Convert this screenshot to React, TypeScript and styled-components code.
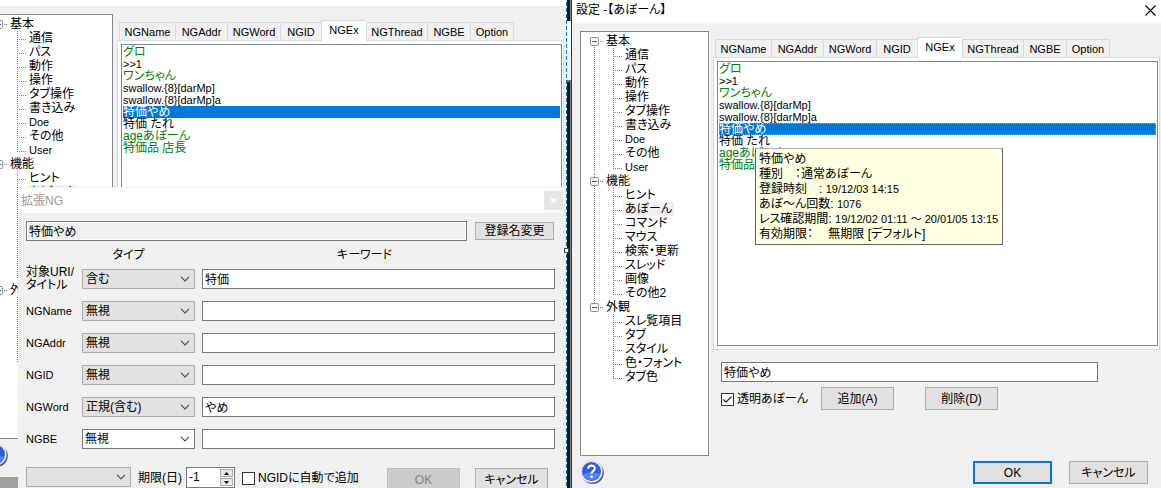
import React, { useState } from "react";
import styled, { createGlobalStyle, css } from "styled-components";

const Global = createGlobalStyle`
  *, *::before, *::after { box-sizing: border-box; }
  html, body { margin: 0; padding: 0; background: #f0f0f0; }
  body, button, input, select {
    font-family: "Liberation Sans", "Noto Sans CJK JP", sans-serif;
    font-size: 12px;
    line-height: 14px;
    font-feature-settings: "palt";
    color: #000;
  }
  ul { list-style: none; margin: 0; padding: 0; }
  p { margin: 0; }
`;

const dotsDown = "repeating-linear-gradient(to bottom, #808080 0 1px, transparent 1px 2px)";
const dotsAcross = "repeating-linear-gradient(to right, #808080 0 1px, transparent 1px 2px)";

const Desktop = styled.main`
  display: grid;
  grid-template-columns: minmax(0, 566fr) 6px minmax(0, 589fr);
  min-height: 100vh;
`;

const LeftPane = styled.section`
  position: relative;
  overflow: hidden;
  background: #a0a0a0;
`;

const RightPane = styled.section`
  min-width: 0;
  background: #f0f0f0;
`;

/* ---------- strip of desktop between the two windows ---------- */

const Strip = styled.div`
  position: relative;
  display: grid;
  grid-template-columns: 1px 1fr 1px;
`;

const DashedEdge = styled.div`
  background: repeating-linear-gradient(to bottom, #fff 0 2px, #0078d7 2px 6px);
`;

const StripFill = styled.div`
  background: linear-gradient(to bottom, transparent 0 21px, #fff 21px 51px, #f0f0f0 51px 80px, #707070 80px 82px, transparent 82px),
    linear-gradient(to right, #181818 0 3px, #858585 3px);
`;

const StripEdge = styled.div`
  background: #383838;
`;

const Handle = styled.div`
  position: absolute;
  left: -2px;
  top: 248px;
  width: 5px;
  height: 5px;
  border: 1px solid #444;
  background: #fff;
`;

/* ---------- shared controls ---------- */

const PushButton = styled.button<{ $width: number; $height?: number; $primary?: boolean }>`
  width: ${(p) => p.$width}px;
  height: ${(p) => p.$height ?? 23}px;
  flex: none;
  padding: 0;
  border: ${(p) => (p.$primary ? "2px solid #0078d7" : "1px solid #adadad")};
  background: #e1e1e1;
  white-space: nowrap;
  &:disabled {
    border-color: #bfbfbf;
    background: #ccc;
    color: #838383;
  }
`;

const TextField = styled.input`
  width: 100%;
  min-width: 0;
  height: 20px;
  padding: 0 2px 2px;
  border: 1px solid #7a7a7a;
  border-radius: 0;
  background: #fff;
  outline: none;
  &:read-only {
    background: #f0f0f0;
    box-shadow: inset 0 0 0 1px #fff;
  }
`;

const SelectBox = styled.div<{ $white?: boolean }>`
  display: grid;
  height: 20px;
  align-items: center;
  border: 1px solid ${(p) => (p.$white ? "#7a7a7a" : "#adadad")};
  background: ${(p) => (p.$white ? "#fff" : "#e1e1e1")};
  select {
    grid-area: 1 / 1;
    width: 100%;
    height: 18px;
    padding: 0 0 0 ${(p) => (p.$white ? 2 : 3)}px;
    border: 0;
    background: transparent;
    appearance: none;
    outline: none;
  }
  svg {
    grid-area: 1 / 1;
    justify-self: end;
    margin-right: 4px;
    pointer-events: none;
  }
`;

const CheckLabel = styled.label`
  display: flex;
  align-items: center;
  gap: 3px;
  white-space: nowrap;
`;

const CheckFrame = styled.span`
  display: grid;
  width: 13px;
  height: 13px;
  flex: none;
  input {
    grid-area: 1 / 1;
    width: 13px;
    height: 13px;
    margin: 0;
    appearance: none;
    border: 1px solid #333;
    background: #fff;
  }
  svg {
    grid-area: 1 / 1;
    pointer-events: none;
    visibility: hidden;
  }
  input:checked + svg {
    visibility: visible;
  }
`;

function Check({ label, initial }: { label: string; initial?: boolean }) {
  return (
    <CheckLabel>
      <CheckFrame>
        <input type="checkbox" defaultChecked={initial} />
        <svg width="13" height="13" viewBox="0 0 13 13" fill="none" stroke="#333" strokeWidth="1.3">
          <path d="M2.5 6.5 5 9 10.5 3.5" />
        </svg>
      </CheckFrame>
      {label}
    </CheckLabel>
  );
}

function Select({ label, options, white }: { label: string; options: string[]; white?: boolean }) {
  return (
    <SelectBox $white={white}>
      <select aria-label={label} defaultValue={options[0]}>
        {options.map((o) => (
          <option key={o}>{o}</option>
        ))}
      </select>
      <svg width="10" height="6" viewBox="0 0 10 6" fill="none" stroke="#555" strokeWidth="1.2">
        <path d="M1 .8 5 4.8 9 .8" />
      </svg>
    </SelectBox>
  );
}

/* ---------- category tree ---------- */

const TreeBox = styled.ul`
  flex: 1;
  min-height: 425px;
  padding: 2px 0;
  border: 1px solid #828790;
  background: #fff;
`;

const Group = styled.li<{ $first: boolean; $last: boolean }>`
  background: ${dotsDown} no-repeat 13px ${(p) => (p.$first ? "7px" : "0")} / 1px ${(p) => (p.$last ? "7px" : "100%")};
`;

const RootRow = styled.div`
  display: flex;
  align-items: center;
  height: 14px;
  padding-left: 9px;
  white-space: nowrap;
`;

const RootLink = styled.span`
  width: 6px;
  height: 1px;
  margin-left: 1px;
  background: ${dotsAcross} no-repeat 0 0 / 4px 1px;
`;

const ChildRow = styled.li`
  display: flex;
  height: 14px;
  padding-left: 32px;
  white-space: nowrap;
`;

const Elbow = styled.span<{ $last: boolean }>`
  width: 10px;
  height: 14px;
  flex: none;
  background: ${dotsDown} no-repeat 0 0 / 1px ${(p) => (p.$last ? "8px" : "100%")},
    ${dotsAcross} no-repeat 0 8px / 9px 1px;
`;

const TreeLabel = styled.span<{ $selected?: boolean; $latin?: boolean }>`
  height: 14px;
  padding: 0 2px;
  font-size: ${(p) => (p.$latin ? 11 : 12)}px;
  background: ${(p) => (p.$selected ? "#f0f0f0" : "transparent")};
`;

const groups = [
  { name: "基本", items: ["通信", "パス", "動作", "操作", "タブ操作", "書き込み", "Doe", "その他", "User"] },
  { name: "機能", items: ["ヒント", "あぼーん", "コマンド", "マウス", "検索・更新", "スレッド", "画像", "その他2"] },
  { name: "外観", items: ["スレ覧項目", "タブ", "スタイル", "色・フォント", "タブ色"] },
];

/* A covered tree keeps its branches but leaves out the labels that lie under the dialog. */
function Tree({ covered }: { covered?: boolean }) {
  return (
    <TreeBox>
      {groups.map((g, gi) => (
        <Group key={g.name} $first={gi === 0} $last={gi === groups.length - 1}>
          <RootRow>
            <svg width="9" height="9" viewBox="0 0 9 9">
              <rect x=".5" y=".5" width="8" height="8" rx="1" fill="#f4f4f4" stroke="#919191" />
              <path d="M2 4.5h5" stroke="#3a55b4" />
            </svg>
            <RootLink />
            {covered && gi === 2 ? g.name.slice(0, 1) : g.name}
          </RootRow>
          <ul>
            {g.items.map((item, i) => (
              <ChildRow key={item}>
                <Elbow $last={i === g.items.length - 1} />
                {!(covered && (gi === 2 || (gi === 1 && i > 1))) && (
                  <TreeLabel $selected={item === "あぼーん"} $latin={/^[A-Z]/.test(item)}>
                    {item}
                  </TreeLabel>
                )}
              </ChildRow>
            ))}
          </ul>
        </Group>
      ))}
    </TreeBox>
  );
}

/* ---------- settings window ---------- */

const TitleBar = styled.header<{ $height: number }>`
  display: flex;
  justify-content: space-between;
  align-items: center;
  height: ${(p) => p.$height}px;
  padding: 0 5px 3px 4px;
  background: #fff;
`;

const WindowTitle = styled.h1`
  margin: 0;
  font-size: 12px;
  font-weight: 400;
`;

const IconButton = styled.button`
  display: grid;
  place-items: center;
  padding: 0;
  border: 0;
  background: transparent;
`;

const HelpButton = styled(IconButton)`
  align-self: flex-start;
  width: 24px;
  height: 24px;
`;

const WindowBody = styled.div<{ $cut?: boolean }>`
  display: flex;
  gap: 4px;
  margin-left: ${(p) => (p.$cut ? "-24px" : "0")};
  padding: 8px ${(p) => (p.$cut ? "2px 10px" : "1px 4px")} 8px;
  background: #f0f0f0;
`;

const SideColumn = styled.nav`
  display: flex;
  flex-direction: column;
  gap: 4px;
  width: 129px;
  flex: none;
`;

const MainColumn = styled.div`
  display: flex;
  flex-direction: column;
  flex: 1;
  min-width: 0;
  padding-top: 6px;
`;

const TabStrip = styled.div`
  display: flex;
  align-items: flex-end;
  height: 20px;
  padding-left: 2px;
`;

const Tab = styled.button<{ $width: number; $active: boolean }>`
  width: ${(p) => p.$width}px;
  height: 18px;
  padding: 0;
  border: 1px solid #d9d9d9;
  border-bottom: 0;
  border-right-width: 0;
  background: #f0f0f0;
  font-size: 11px;
  &:last-child {
    border-right-width: 1px;
  }
  ${(p) =>
    p.$active &&
    css`
      position: relative;
      height: 21px;
      margin-bottom: -1px;
      padding-bottom: 2px;
      background: #fff;
    `}
`;

const TabPanel = styled.div`
  padding: 3px 1px 3px 3px;
  border: 1px solid #dcdcdc;
  background: #fff;
`;

const ListFrame = styled.div`
  position: relative;
  min-height: 285px;
  padding: 1px;
  border: 1px solid #828790;
`;

const ListItem = styled.li<{ $green?: boolean; $selected: boolean; $focus?: boolean; $latin?: boolean }>`
  height: 12px;
  font-size: ${(p) => (p.$latin ? 11 : 12)}px;
  line-height: 12px;
  white-space: nowrap;
  color: ${(p) => (p.$selected ? "#fff" : p.$green ? "#008000" : "#000")};
  background: ${(p) => (p.$selected ? "#0078d7" : "transparent")};
  outline: ${(p) => (p.$selected && p.$focus ? "1px dotted #ff8728" : "none")};
  outline-offset: -1px;
  cursor: default;
`;

const Tooltip = styled.div`
  position: absolute;
  left: 37px;
  top: 86px;
  width: 248px;
  padding: 3px 2px 2px 3px;
  border: 1px solid #646464;
  border-top-color: #aaa;
  background: #ffffe1;
  line-height: 15px;
  white-space: pre;
`;

const TooltipValue = styled.span`
  font-size: 11px;
`;

const EntryForm = styled.form`
  display: flex;
  flex-direction: column;
  gap: 5px;
  padding: 12px 62px 0 8px;
`;

const EntryActions = styled.div`
  display: flex;
  gap: 31px;
  align-items: flex-start;
`;

const CheckSlot = styled.div`
  width: 69px;
  padding-top: 5px;
`;

const WindowActions = styled.footer`
  display: flex;
  justify-content: flex-end;
  gap: 17px;
  margin-top: auto;
  padding-right: 12px;
`;

const tabs: [string, number][] = [
  ["NGName", 56],
  ["NGAddr", 52],
  ["NGWord", 53],
  ["NGID", 41],
  ["NGEx", 45],
  ["NGThread", 61],
  ["NGBE", 43],
  ["Option", 44],
];

const entries: { text: string; green?: boolean; latin?: boolean }[] = [
  { text: "グロ", green: true },
  { text: ">>1", latin: true },
  { text: "ワンちゃん", green: true },
  { text: "swallow.{8}[darMp]", latin: true },
  { text: "swallow.{8}[darMp]a", latin: true },
  { text: "特価やめ" },
  { text: "特価 たれ" },
  { text: "ageあぼーん", green: true },
  { text: "特価品 店長", green: true },
];

const details: { label: string; value?: string }[] = [
  { label: "特価やめ" },
  { label: "種別　：通常あぼーん" },
  { label: "登録時刻　: ", value: "19/12/03 14:15" },
  { label: "あぼ～ん回数: ", value: "1076" },
  { label: "レス確認期間: ", value: "19/12/02 01:11 ～ 20/01/05 13:15" },
  { label: "有効期限：　 無期限 [デフォルト]" },
];

function HelpIcon() {
  return (
    <svg width="24" height="24" viewBox="0 0 24 24">
      <circle cx="12.6" cy="12.8" r="11.2" fill="#555" />
      <circle cx="11.5" cy="11.5" r="11.2" fill="#e4e4ea" />
      <circle cx="11.5" cy="11.5" r="9.4" fill="#2b5fe0" />
      <path d="M3 14a9 9 0 0 0 17 0q-8-3-17 0" fill="#4f86f6" />
      <path d="M8.2 8.8c0-4.2 6.6-4.2 6.6-.4 0 2.6-3.3 2.6-3.3 5.2" fill="none" stroke="#fff" strokeWidth="2.1" />
      <circle cx="11.5" cy="16.8" r="1.4" fill="#fff" />
    </svg>
  );
}

function SettingsWindow({ active }: { active?: boolean }) {
  const [tab, setTab] = useState("NGEx");
  const [selected, setSelected] = useState("特価やめ");
  return (
    <>
      <TitleBar $height={active ? 23 : 6}>
        {active && (
          <>
            <WindowTitle>設定 -【あぼーん】</WindowTitle>
            <IconButton type="button" aria-label="閉じる">
              <svg width="11" height="11" viewBox="0 0 11 11" stroke="#000" strokeWidth="1.1">
                <path d="M.5.5l10 10M10.5.5l-10 10" />
              </svg>
            </IconButton>
          </>
        )}
      </TitleBar>
      <WindowBody $cut={!active}>
        <SideColumn>
          <Tree covered={!active} />
          <HelpButton type="button" aria-label="ヘルプ">
            <HelpIcon />
          </HelpButton>
        </SideColumn>
        <MainColumn>
          <TabStrip role="tablist">
            {tabs.map(([name, width]) => (
              <Tab
                key={name}
                type="button"
                role="tab"
                aria-selected={tab === name}
                $width={width}
                $active={tab === name}
                onClick={() => setTab(name)}
              >
                {name}
              </Tab>
            ))}
          </TabStrip>
          <TabPanel>
            <ListFrame>
              <ul role="listbox" aria-label="NGEx">
                {entries.map((e) => (
                  <ListItem
                    key={e.text}
                    role="option"
                    aria-selected={selected === e.text}
                    $green={e.green}
                    $latin={e.latin}
                    $selected={selected === e.text}
                    $focus={active}
                    onClick={() => setSelected(e.text)}
                  >
                    {e.text}
                  </ListItem>
                ))}
              </ul>
              {active && (
                <Tooltip role="tooltip">
                  {details.map((line) => (
                    <p key={line.label}>
                      {line.label}
                      {line.value && <TooltipValue>{line.value}</TooltipValue>}
                    </p>
                  ))}
                </Tooltip>
              )}
            </ListFrame>
          </TabPanel>
          {active && (
            <>
              <EntryForm onSubmit={(e) => e.preventDefault()}>
                <TextField aria-label="登録名" defaultValue="特価やめ" />
                <EntryActions>
                  <CheckSlot>
                    <Check label="透明あぼーん" initial />
                  </CheckSlot>
                  <PushButton type="button" $width={73}>
                    追加(A)
                  </PushButton>
                  <PushButton type="button" $width={73}>
                    削除(D)
                  </PushButton>
                </EntryActions>
              </EntryForm>
              <WindowActions>
                <PushButton type="button" $width={79} $primary>
                  OK
                </PushButton>
                <PushButton type="button" $width={79}>
                  キャンセル
                </PushButton>
              </WindowActions>
            </>
          )}
        </MainColumn>
      </WindowBody>
    </>
  );
}

/* ---------- extended NG dialog ---------- */

const Dialog = styled.form`
  position: absolute;
  left: 18px;
  right: 0;
  top: 187px;
  min-height: 301px;
  border-top: 1px solid #f0f0f0;
  background: #f0f0f0;
`;

const DialogTitle = styled.header`
  display: flex;
  justify-content: space-between;
  align-items: center;
  height: 25px;
  margin-right: 2px;
  padding: 0 1px 0 3px;
  background: #fff;
  color: #999;
`;

const DialogClose = styled(IconButton)`
  width: 19px;
  height: 19px;
  background: #e5e5e5;
`;

const DialogBody = styled.div`
  padding: 8px 11px 0 8px;
`;

const NameRow = styled.div`
  display: grid;
  grid-template-columns: minmax(0, 1fr) 79px;
  gap: 8px;
  align-items: center;
  padding-right: 1px;
`;

const FieldGrid = styled.div`
  display: grid;
  grid-template-columns: 49px 113px minmax(0, 1fr);
  column-gap: 7px;
  row-gap: 12px;
  align-items: center;
`;

const HeadCell = styled.span<{ $type?: boolean }>`
  height: 28px;
  padding-top: 7px;
  text-align: center;
  padding-right: ${(p) => (p.$type ? 20 : 28)}px;
`;

const FieldLabel = styled.label<{ $latin?: boolean }>`
  margin: -3px 0;
  font-size: ${(p) => (p.$latin ? 11 : 12)}px;
  line-height: 13px;
  white-space: pre;
`;

const DialogFooter = styled.div`
  display: flex;
  align-items: flex-start;
  margin-top: 18px;
  padding-right: 7px;
`;

const UnitSelect = styled.div`
  width: 105px;
  flex: none;
`;

const DaysLabel = styled.label`
  display: flex;
  width: 97px;
  margin: 0 7px;
  justify-content: space-between;
  align-items: center;
  white-space: nowrap;
`;

const Spinner = styled.span`
  display: grid;
  grid-template-columns: minmax(0, 1fr) 13px;
  grid-template-rows: 8px 8px;
  gap: 1px 0;
  width: 49px;
  height: 21px;
  flex: none;
  padding: 1px;
  border: 1px solid #7a7a7a;
  background: #fff;
  input {
    grid-row: 1 / 3;
    width: 100%;
    padding: 0 0 2px 1px;
    border: 0;
    outline: none;
    background: transparent;
  }
`;

const SpinButton = styled.button`
  display: grid;
  place-items: center;
  padding: 0;
  border: 1px solid #acacac;
  background: #e8e8e8;
`;

const FooterCheck = styled.div`
  padding-top: 4px;
`;

const FooterButtons = styled.div`
  display: flex;
  gap: 15px;
  margin-left: auto;
  padding-top: 1px;
`;

const fields = [
  { label: "対象URI/\nタイトル", mode: "含む", value: "特価" },
  { label: "NGName", mode: "無視", value: "" },
  { label: "NGAddr", mode: "無視", value: "" },
  { label: "NGID", mode: "無視", value: "" },
  { label: "NGWord", mode: "正規(含む)", value: "やめ" },
  { label: "NGBE", mode: "無視", value: "" },
];

function NgDialog() {
  return (
    <Dialog onSubmit={(e) => e.preventDefault()}>
      <DialogTitle>
        <span>拡張NG</span>
        <DialogClose type="button" aria-label="閉じる">
          <svg width="7" height="7" viewBox="0 0 7 7" stroke="#fff" strokeWidth="1.6">
            <path d="M1 1l5 5M6 1 1 6" />
          </svg>
        </DialogClose>
      </DialogTitle>
      <DialogBody>
        <NameRow>
          <TextField aria-label="登録名" readOnly value="特価やめ" />
          <PushButton type="button" $width={79} $height={18}>
            登録名変更
          </PushButton>
        </NameRow>
        <FieldGrid>
          <span />
          <HeadCell $type>タイプ</HeadCell>
          <HeadCell>キーワード</HeadCell>
        </FieldGrid>
        <FieldGrid>
          {fields.map((f, i) => (
            <React.Fragment key={f.label}>
              <FieldLabel htmlFor={`keyword-${i}`} $latin={i > 0}>
                {f.label}
              </FieldLabel>
              <Select label={`${f.label} タイプ`} options={[f.mode]} white={i === fields.length - 1} />
              <TextField id={`keyword-${i}`} defaultValue={f.value} />
            </React.Fragment>
          ))}
        </FieldGrid>
        <DialogFooter>
          <UnitSelect>
            <Select label="期限" options={[""]} />
          </UnitSelect>
          <DaysLabel>
            期限(日)
            <Spinner>
              <input defaultValue="-1" inputMode="numeric" />
              <SpinButton type="button" aria-label="増やす">
                <svg width="5" height="3" viewBox="0 0 5 3">
                  <path d="M0 3 2.5 0 5 3z" />
                </svg>
              </SpinButton>
              <SpinButton type="button" aria-label="減らす">
                <svg width="5" height="3" viewBox="0 0 5 3">
                  <path d="M0 0 2.5 3 5 0z" />
                </svg>
              </SpinButton>
            </Spinner>
          </DaysLabel>
          <FooterCheck>
            <Check label="NGIDに自動で追加" />
          </FooterCheck>
          <FooterButtons>
            <PushButton type="submit" $width={73} disabled>
              OK
            </PushButton>
            <PushButton type="button" $width={73}>
              キャンセル
            </PushButton>
          </FooterButtons>
        </DialogFooter>
      </DialogBody>
    </Dialog>
  );
}

export default function App() {
  return (
    <>
      <Global />
      <Desktop>
        <LeftPane>
          <SettingsWindow />
          <NgDialog />
        </LeftPane>
        <Strip>
          <DashedEdge />
          <StripFill />
          <StripEdge />
          <Handle />
        </Strip>
        <RightPane>
          <SettingsWindow active />
        </RightPane>
      </Desktop>
    </>
  );
}
